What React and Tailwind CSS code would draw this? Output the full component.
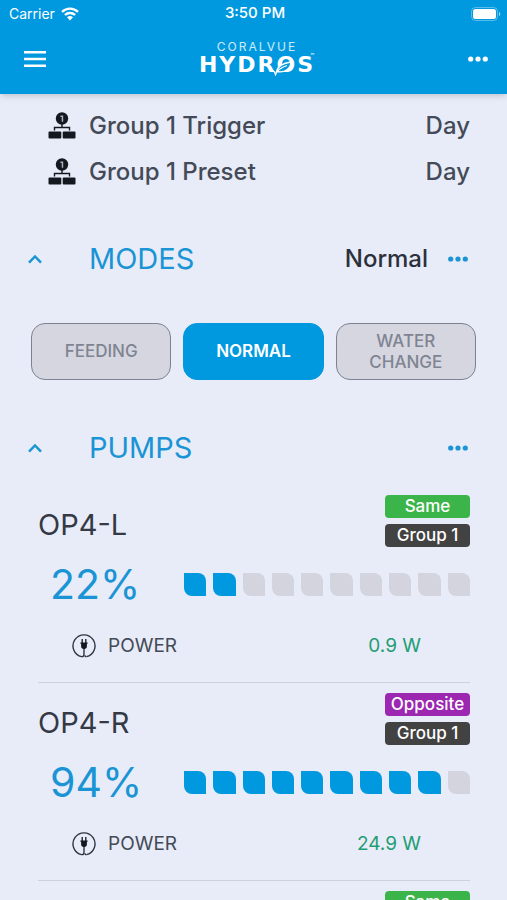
const groupRows = [
  { label: 'Group 1 Trigger', value: 'Day' },
  { label: 'Group 1 Preset', value: 'Day' },
];

const modes = ['Feeding', 'Normal', 'Water Change'];
const activeMode = 'Normal';

const pumps = [
  { id: 1, name: 'OP4-L', sync: 'Same', group: 'Group 1', percent: 22, power: '0.9 W' },
  { id: 2, name: 'OP4-R', sync: 'Opposite', group: 'Group 1', percent: 94, power: '24.9 W' },
  { id: 3, sync: 'Same' },
];

function WifiIcon() {
  return (
    <svg width="18" height="14" viewBox="0 0 18 14" fill="none" stroke="currentColor" strokeWidth="2.4">
      <path d="M1 4.8a11.6 11.6 0 0 1 16 0" />
      <path d="M3.9 8a7.4 7.4 0 0 1 10.2 0" />
      <path d="M9 13.4 6 10.3a4.4 4.4 0 0 1 6 0z" fill="currentColor" stroke="none" />
    </svg>
  );
}

function BatteryIcon() {
  return (
    <svg width="30" height="14" viewBox="0 0 30 14" fill="none">
      <rect x="0.5" y="0.5" width="26" height="13" rx="4" stroke="white" strokeOpacity="0.35" />
      <rect x="2" y="2" width="23" height="10" rx="2.5" fill="white" />
      <path d="M28 4.8c1.8.7 1.8 3.7 0 4.4z" fill="white" fillOpacity="0.6" />
    </svg>
  );
}

function DotsIcon() {
  return (
    <svg width="20" height="6" viewBox="0 0 20 6" fill="currentColor">
      <circle cx="2.7" cy="3" r="2.6" />
      <circle cx="10" cy="3" r="2.6" />
      <circle cx="17.3" cy="3" r="2.6" />
    </svg>
  );
}

function ChevronUpIcon() {
  return (
    <svg width="14" height="10" viewBox="0 0 14 10" fill="none" stroke="currentColor" strokeWidth="2.4">
      <path d="M1 8.6 7 2.4l6 6.2" />
    </svg>
  );
}

function GroupIcon() {
  return (
    <svg width="28" height="28" viewBox="0 0 28 28" fill="#14181f">
      <circle cx="14" cy="6.5" r="6.2" />
      <path d="M12.4 3.6h2.8v6.2h-1.5V5h-1.3z" fill="#aab0bd" />
      <path d="M14 12v3.5M6.5 18.5v-3h15v3" fill="none" stroke="#14181f" strokeWidth="1.4" />
      <rect x="0.5" y="19.5" width="12.8" height="7" rx="1" />
      <rect x="14.7" y="19.5" width="12.8" height="7" rx="1" />
    </svg>
  );
}

function PlugIcon() {
  return (
    <svg width="24" height="24" viewBox="0 0 24 24" fill="none" stroke="#2f3440" strokeWidth="1.4">
      <path d="M12 14v5.5c0 2.2-.5 3.4-2.4 3.1A11 11 0 1 1 14.4 22.6" />
      <path d="M14.4 22.6c-.9.1-1.4-.2-1.4-1.4" />
      <path d="M8.4 8.6h7.2v1.2h-.7v2.4c0 1.7-1 2.8-2.9 2.8s-2.9-1.1-2.9-2.8V9.8h-.7z" fill="#14181f" stroke="none" />
      <path d="M10.2 5v4M13.8 5v4" stroke="#14181f" strokeWidth="1.3" />
    </svg>
  );
}

function Logo() {
  return (
    <div className="flex flex-col items-center text-white">
      <span className="text-xs leading-3 tracking-[2px] text-white/80">CORALVUE</span>
      <span className="relative font-['DejaVu_Sans',sans-serif] text-[22px] leading-6 font-bold tracking-[2px]">
        HYDROS
        <span className="absolute right-0 top-0 text-[5px] leading-[5px] tracking-normal">™</span>
        {/* Leaf laid over the letter O */}
        <svg className="absolute right-5 top-[5px]" width="24" height="18" viewBox="0 0 24 18" fill="none">
          <path d="M5.5 13.5C7 7.5 13 5 20 4 19.5 10 14.5 15.500 5.5 13.5z" fill="#0099df" stroke="white" strokeWidth="1.3" />
          <path d="M0 12.5c3 0 4 1.5 4.5 4C6 12.5 10 9.5 16 7.5" stroke="white" strokeWidth="1.3" />
        </svg>
      </span>
    </div>
  );
}

function SectionHeader({ title, value }) {
  return (
    <div className="flex items-center h-12 pl-7 pr-[39px] text-[#1a94d4]">
      <button aria-label={`Collapse ${title}`} className="flex w-[61px]">
        <ChevronUpIcon />
      </button>
      <h2 className="flex-1 text-[29px] leading-9">{title}</h2>
      {value && <span className="mr-5 text-2xl font-medium text-[#2b303c]">{value}</span>}
      <button aria-label={`${title} options`}>
        <DotsIcon />
      </button>
    </div>
  );
}

function LevelBar({ percent }) {
  const filled = Math.floor(percent / 10);
  return (
    <div className="flex flex-1 gap-[7px]">
      {Array.from({ length: 10 }, (_, i) => (
        <span
          key={i}
          className={`flex-1 h-[23px] rounded-tr-lg rounded-bl-lg ${i < filled ? 'bg-[#0099df]' : 'bg-[#d3d4de]'}`}
        />
      ))}
    </div>
  );
}

function PumpCard({ pump }) {
  return (
    <article className="pt-[10px] pb-6 border-b border-[#cdd1dd]">
      <div className="flex items-center justify-between">
        <h3 className="pt-2 text-[29px] leading-9 text-[#343945]">{pump.name}</h3>
        <div className="flex flex-col gap-[6px] w-[85px] text-center text-[17px] leading-[23px] font-medium text-white">
          <span className={`rounded ${pump.sync === 'Same' ? 'bg-[#3bb54a]' : 'bg-[#9c27b0]'}`}>{pump.sync}</span>
          {pump.group && <span className="rounded bg-[#424242]">{pump.group}</span>}
        </div>
      </div>

      {pump.power && (
        <>
          <div className="flex items-center mt-3 h-[50px]">
            <span className="w-[146px] pl-3 text-[41px] leading-[50px] text-[#1a94d4]">{pump.percent}%</span>
            <LevelBar percent={pump.percent} />
          </div>

          <div className="flex items-center mt-[25px] pl-[34px] pr-[49px] text-[19px] leading-6">
            <PlugIcon />
            <span className="flex-1 pl-3 text-[#454a56]">POWER</span>
            <span className="text-[#1f9d74]">{pump.power}</span>
          </div>
        </>
      )}
    </article>
  );
}

export default function App() {
  return (
    <div className="h-screen overflow-hidden bg-[#e7ecf8] font-['Inter',sans-serif]">
      <header className="relative h-[94px] bg-[#0099df] text-white shadow-md">
        {/* Status bar */}
        <div className="grid grid-cols-3 items-center h-[27px] pl-[9px] pr-[6px] text-[14px]">
          <div className="flex items-center gap-[6px]">
            <span>Carrier</span>
            <WifiIcon />
          </div>
          <span className="text-center text-[15px] font-medium">3:50 PM</span>
          <div className="flex justify-end">
            <BatteryIcon />
          </div>
        </div>

        {/* App bar */}
        <div className="flex items-center justify-between h-16 pl-6 pr-[19px]">
          <button aria-label="Menu">
            <svg width="22" height="16" viewBox="0 0 22 16" fill="currentColor">
              <path d="M0 0h22v2.5H0zM0 6.7h22v2.5H0zM0 13.4h22v2.5H0z" />
            </svg>
          </button>
          <Logo />
          <button aria-label="More">
            <DotsIcon />
          </button>
        </div>
      </header>

      <main>
        <ul className="pt-[9px] pl-12 pr-[37px]">
          {groupRows.map((row) => (
            <li key={row.label} className="flex items-center h-[46px] text-2xl font-medium text-[#444a57]">
              <GroupIcon />
              <span className="flex-1 pl-[13px]">{row.label}</span>
              <span>{row.value}</span>
            </li>
          ))}
        </ul>

        <section className="pt-10">
          <SectionHeader title="MODES" value="Normal" />
          <div className="grid grid-cols-3 gap-3 mt-10 px-[31px]">
            {modes.map((mode) => (
              <button
                key={mode}
                className={`h-[57px] px-6 rounded-[14px] border text-[17px] leading-[21px] uppercase ${
                  mode === activeMode
                    ? 'border-[#0099df] bg-[#0099df] font-semibold text-white'
                    : 'border-[#7d8293] bg-[#d5d6df] font-medium text-[#7f8492]'
                }`}
              >
                {mode}
              </button>
            ))}
          </div>
        </section>

        <section className="pt-11">
          <SectionHeader title="PUMPS" />
          <div className="mt-[13px] pl-[38px] pr-[37px]">
            {pumps.map((pump) => (
              <PumpCard key={pump.id} pump={pump} />
            ))}
          </div>
        </section>
      </main>
    </div>
  );
}
